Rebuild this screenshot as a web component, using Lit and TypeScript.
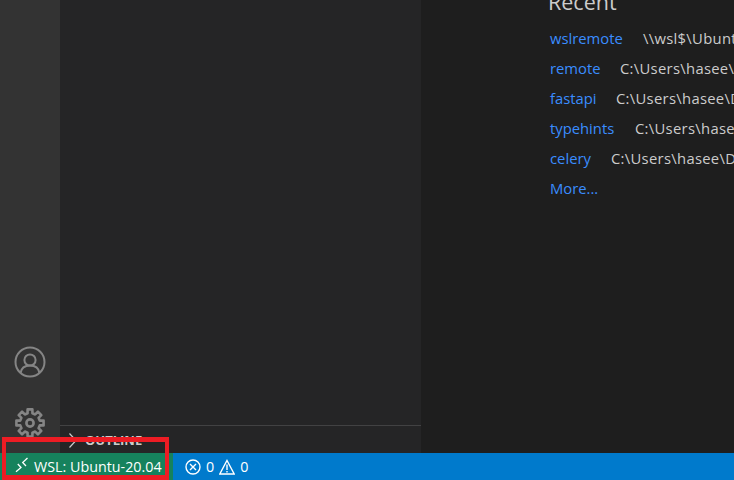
import { LitElement, html, css } from "lit";
import { customElement } from "lit/decorators.js";

const RECENT = [
  ["wslremote", "\\\\wsl$\\Ubuntu-20.04\\home", 93],
  ["remote", "C:\\Users\\hasee\\Desktop\\remote", 70],
  ["fastapi", "C:\\Users\\hasee\\Desktop\\fastapi", 66],
  ["typehints", "C:\\Users\\hasee\\Desktop\\typehints", 85],
  ["celery", "C:\\Users\\hasee\\Desktop\\celery", 61],
] as const;

function gearPath(cx: number, cy: number, R: number, r: number): string {
  const pt = (deg: number, rad: number) => {
    const a = ((deg - 90) * Math.PI) / 180;
    return `${(cx + rad * Math.cos(a)).toFixed(2)} ${(cy + rad * Math.sin(a)).toFixed(2)}`;
  };
  const parts: string[] = [];
  for (let i = 0; i < 8; i++) {
    const a = i * 45;
    parts.push(pt(a - 14, r), pt(a - 10, R), pt(a + 10, R), pt(a + 14, r));
  }
  return "M" + parts.join("L") + "Z";
}

@customElement("app-root")
export class AppRoot extends LitElement {
  static styles = css`
    :host {
      display: block;
      width: 734px;
      height: 480px;
      position: relative;
      overflow: hidden;
      font-family: "Open Sans", "Noto Sans", sans-serif;
      background: #1e1e1e;
    }
    .main { display: flex; height: 453px; }
    .activity {
      width: 60px;
      background: #333333;
      display: flex;
      flex-direction: column;
      justify-content: flex-end;
      align-items: center;
      gap: 29px;
      padding-bottom: 14px;
      box-sizing: border-box;
    }
    .activity svg { display: block; flex: none; }
    .side {
      width: 361px;
      background: #252526;
      display: flex;
      flex-direction: column;
      justify-content: flex-end;
    }
    .outline {
      height: 28px;
      box-sizing: border-box;
      border-top: 1px solid #424243;
      display: flex;
      align-items: center;
      gap: 1px;
      padding-left: 8px;
      font-size: 13px;
      font-weight: 700;
      color: #cccccc;
    }
    .editor {
      flex: 1;
      padding-left: 127px;
      overflow: hidden;
      white-space: nowrap;
    }
    h2 {
      margin: -13px 0 0 0;
      font-weight: 400;
      font-size: 21.5px;
      line-height: 30px;
      color: #cccccc;
      height: 36px;
    }
    .row {
      height: 30px;
      line-height: 30px;
      font-size: 14.8px;
      padding-left: 2px;
      color: #cccccc;
      display: flex;
    }
    .row a { color: #3a8dff; flex: none; }
    .row span { letter-spacing: 0.3px; }
    .status {
      height: 27px;
      background: #007acc;
      color: #ffffff;
      display: flex;
      align-items: center;
      font-size: 14.3px;
    }
    .remote {
      width: 173px;
      height: 27px;
      background: #16825d;
      display: flex;
      align-items: center;
      gap: 4px;
      padding-left: 14px;
      box-sizing: border-box;
    }
    .problems {
      display: flex;
      align-items: center;
      gap: 5px;
      padding-left: 12px;
    }
    .mark {
      position: absolute;
      left: 2px;
      top: 437px;
      width: 167px;
      height: 43px;
      border: 4px solid #ed1c24;
      border-width: 5px 4px;
      box-sizing: border-box;
      pointer-events: none;
    }
  `;

  render() {
    return html`
      <div class="main">
        <div class="activity">
          <svg width="32" height="32" viewBox="0 0 32 32" fill="none" stroke="#858585" stroke-width="2">
            <circle cx="16" cy="16" r="14.5"></circle>
            <circle cx="16" cy="14" r="5.6"></circle>
            <path d="M6.5 27c1-6 5-7.5 9.5-7.5s8.5 1.5 9.5 7.5"></path>
          </svg>
          <svg width="32" height="32" viewBox="0 0 32 32" fill="none" stroke="#858585" stroke-width="2.6" stroke-linejoin="round">
            <path d=${gearPath(16, 16, 13.8, 10)}></path>
            <circle cx="16" cy="16" r="3.6"></circle>
          </svg>
        </div>
        <div class="side">
          <div class="outline">
            <svg width="16" height="16" viewBox="0 0 16 16" fill="none" stroke="#cccccc" stroke-width="1.2"><path d="M1.5 1.5L8 8.5l-6.5 7"></path></svg>
            <span>OUTLINE</span>
          </div>
        </div>
        <div class="editor">
          <h2>Recent</h2>
          ${RECENT.map(
            ([name, path, col]) => html`<div class="row"><a style="width:${col}px">${name}</a><span>${path}</span></div>`
          )}
          <div class="row"><a>More...</a></div>
        </div>
      </div>
      <div class="status">
        <div class="remote">
          <svg width="16" height="20" viewBox="0 0 16 20" fill="none" stroke="#ffffff" stroke-width="1.3"><path d="M2 14.8l5-4.3-3.2-3.5M13.5 1L8.7 5.5 12 9"></path></svg>
          <span>WSL: Ubuntu-20.04</span>
        </div>
        <div class="problems">
          <svg width="16" height="16" viewBox="0 0 16 16" fill="none" stroke="#ffffff" stroke-width="1.4"><circle cx="8" cy="8" r="7"></circle><path d="M5 5l6 6M11 5l-6 6"></path></svg>
          <span>0</span>
          <svg width="16" height="16" viewBox="0 0 16 16" fill="none" stroke="#ffffff" stroke-width="1.4"><path d="M8 1.5L15.2 15H.8z"></path><path d="M8 5.5v5.5M8 12v1.6"></path></svg>
          <span>0</span>
        </div>
      </div>
      <div class="mark"></div>
    `;
  }
}
